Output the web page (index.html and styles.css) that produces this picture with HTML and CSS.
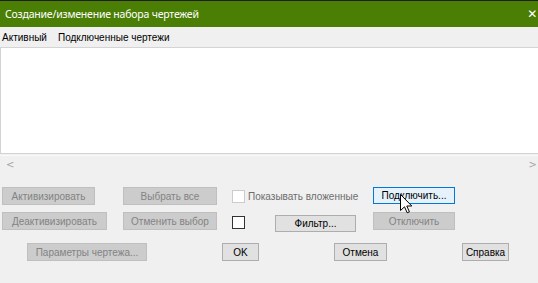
FILE: index.html
```html
<!DOCTYPE html>
<html lang="ru">
<head>
  <meta charset="UTF-8">
  <title>Создание/изменение набора чертежей</title>
  <link rel="stylesheet" href="styles.css">
</head>
<body>
  <div class="dialog">
    <div class="titlebar">
      <span class="title">Создание/изменение набора чертежей</span>
      <span class="close">✕</span>
    </div>

    <div class="header">
      <span class="col-active">Активный</span>
      <span class="col-name">Подключенные чертежи</span>
    </div>

    <div class="list"></div>

    <div class="hscroll">
      <span class="arrow">&lt;</span>
      <span class="arrow">&gt;</span>
    </div>

    <div class="controls">
      <div class="row row-1">
        <button class="btn disabled w-activate" disabled>Активизировать</button>
        <button class="btn disabled w-select" disabled>Выбрать все</button>
        <label class="check-group">
          <span class="box box-disabled"></span>
          <span class="check-label">Показывать вложенные</span>
        </label>
        <button class="btn focused w-connect">Подключить...</button>
      </div>

      <div class="row row-2">
        <button class="btn disabled w-deactivate" disabled>Деактивизировать</button>
        <button class="btn disabled w-unselect" disabled>Отменить выбор</button>
        <span class="box box-plain"></span>
        <button class="btn w-filter">Фильтр...</button>
        <button class="btn disabled w-disconnect" disabled>Отключить</button>
      </div>

      <div class="row row-3">
        <button class="btn disabled w-params" disabled>Параметры чертежа...</button>
        <button class="btn w-ok">OK</button>
        <button class="btn w-cancel">Отмена</button>
        <button class="btn w-help">Справка</button>
      </div>
    </div>

    <svg class="cursor" width="13" height="20" viewBox="0 0 13 20">
      <path d="M0.5,0.5 L0.5,16.5 L4.5,12.8 L7.2,18.8 L9.4,17.8 L6.8,12 L11.8,12 Z" fill="#fff" stroke="#000" stroke-width="1"/>
    </svg>
  </div>
</body>
</html>
```

FILE: styles.css
```css
body {
  margin: 0;
  padding: 0;
  background-color: #f0f0f0;
  font-family: "Liberation Sans", Arial, sans-serif;
  font-size: 10px;
  color: #000;
}
.dialog {
  position: relative;
  width: 538px;
  height: 283px;
  overflow: hidden;
  background-color: #f0f0f0;
}
.titlebar {
  height: 26px;
  border-top: 1px solid #1f1f1f;
  background-color: #4a7e04;
  color: #fff;
  display: flex;
  align-items: center;
  justify-content: space-between;
  padding-left: 5px;
  font-family: "Noto Sans", "Open Sans", sans-serif;
  font-size: 10.5px;
  letter-spacing: -0.2px;
}
.close {
  font-size: 12px;
  margin-right: 1px;
  font-family: "DejaVu Sans", sans-serif;
}
.header {
  height: 20px;
  display: flex;
  align-items: center;
  padding-left: 2px;
}
.col-name {
  margin-left: 11px;
}
.list {
  height: 105px;
  background-color: #fff;
  border: 1px solid #d4d4d4;
  border-right: none;
}
.hscroll {
  height: 17px;
  margin-top: 1px;
  border-top: 1px solid #fafafa;
  display: flex;
  justify-content: space-between;
  align-items: center;
  padding: 0 1px 0 6px;
  color: #a6a6a6;
  font-family: "DejaVu Sans", sans-serif;
  font-size: 10px;
}
.controls {
  padding-top: 14px;
}
.row {
  display: flex;
  align-items: flex-start;
}
.row-1 {
  height: 25px;
}
.row-2 {
  height: 31px;
}
.btn {
  font-family: "Liberation Sans", Arial, sans-serif;
  font-size: 10px;
  height: 18px;
  padding: 0;
  margin: 0;
  border: 1px solid #adadad;
  background-color: #e1e1e1;
  color: #000;
  box-sizing: border-box;
}
.btn.disabled {
  border-color: #bfbfbf;
  background-color: #cccccc;
  color: #838383;
}
.btn.focused {
  height: 17px;
  border-color: #0078d7;
  background-color: #e5f1fb;
}
.w-activate { width: 93px; margin-left: 2px; }
.w-select { width: 94px; margin-left: 28px; }
.check-group {
  width: 141px;
  margin-left: 15px;
  display: flex;
  align-items: center;
  height: 18px;
}
.box {
  display: block;
  width: 13px;
  height: 13px;
  box-sizing: border-box;
  background-color: #fff;
  flex-shrink: 0;
}
.box-disabled {
  border: 1px solid #cccccc;
}
.box-plain {
  border: 1px solid #333;
  margin-left: 15px;
  margin-top: 4px;
}
.check-label {
  margin-left: 3px;
  color: #6d6d6d;
}
.w-connect { width: 82px; }
.w-deactivate { width: 105px; margin-left: 2px; }
.w-unselect { width: 94px; margin-left: 16px; }
.w-filter { width: 81px; margin-left: 30px; margin-top: 3px; height: 17px; }
.w-disconnect { width: 82px; margin-left: 17px; }
.w-params { width: 120px; margin-left: 27px; }
.w-ok { width: 37px; margin-left: 75px; }
.w-cancel { width: 53px; margin-left: 75px; }
.w-help { width: 47px; margin-left: 75px; }
.cursor {
  position: absolute;
  left: 400px;
  top: 194px;
}
```
